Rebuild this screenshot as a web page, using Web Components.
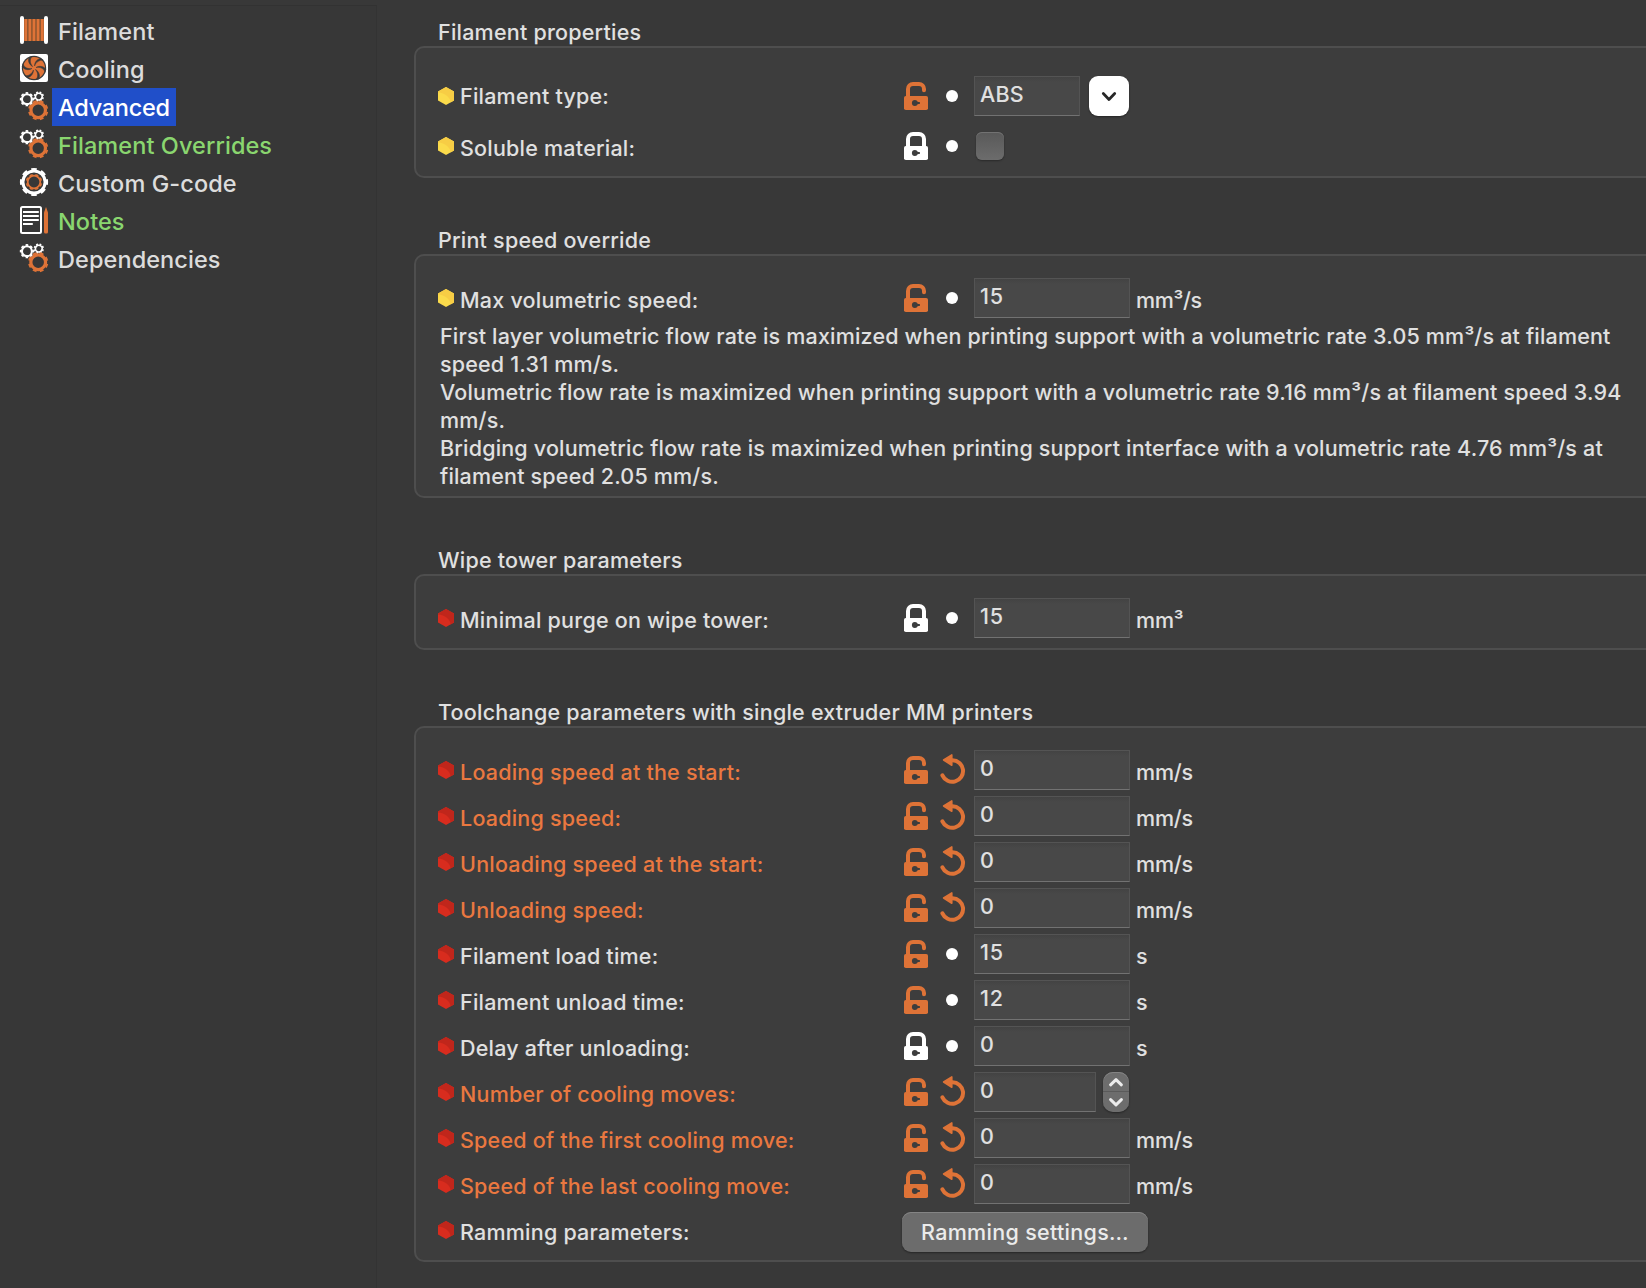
<!DOCTYPE html>
<html lang="en">
<head>
<meta charset="utf-8">
<title>Filament settings</title>
<style>
  html, body { margin: 0; height: 100%; background: #383838; overflow: hidden; }
  body { font: 450 21.5px/28px Inter, "Liberation Sans", sans-serif; color: #e0e0e0; letter-spacing: .22px; font-feature-settings: "calt" 0; }
</style>
</head>
<body>
<settings-page>
  <side-nav slot="nav">
    <nav-item icon="spool">Filament</nav-item>
    <nav-item icon="fan">Cooling</nav-item>
    <nav-item icon="gears" selected>Advanced</nav-item>
    <nav-item icon="gears" modified>Filament Overrides</nav-item>
    <nav-item icon="gcode">Custom G-code</nav-item>
    <nav-item icon="note" modified>Notes</nav-item>
    <nav-item icon="gears">Dependencies</nav-item>
  </side-nav>

  <option-group heading="Filament properties" style="--top:28px;--row-gap:10px;--bottom:10px">
    <option-row mode="advanced" lock="open" mark="dot" label="Filament type:" style="--label-top:6px"><text-field style="width:106px;letter-spacing:.2px">ABS</text-field><drop-button></drop-button></option-row>
    <option-row mode="advanced" lock="closed" mark="dot" label="Soluble material:"><check-box></check-box></option-row>
  </option-group>

  <option-group heading="Print speed override" style="--bottom:6px">
    <option-row mode="advanced" lock="open" mark="dot" label="Max volumetric speed:"><text-field>15</text-field><unit-label style="letter-spacing:-.35px">mm³/s</unit-label></option-row>
    <info-text>First layer volumetric flow rate is maximized when printing support with a volumetric rate 3.05 mm³/s at filament<br>speed 1.31 mm/s.<br>Volumetric flow rate is maximized when printing support with a volumetric rate 9.16 mm³/s at filament speed 3.94<br>mm/s.<br>Bridging volumetric flow rate is maximized when printing support interface with a volumetric rate 4.76 mm³/s at<br>filament speed 2.05 mm/s.</info-text>
  </option-group>

  <option-group heading="Wipe tower parameters" style="--bottom:10px">
    <option-row mode="expert" lock="closed" mark="dot" label="Minimal purge on wipe tower:"><text-field>15</text-field><unit-label>mm³</unit-label></option-row>
  </option-group>

  <option-group heading="Toolchange parameters with single extruder MM printers" style="--bottom:10px">
    <option-row mode="expert" lock="open" mark="revert" label="Loading speed at the start:"><text-field>0</text-field><unit-label>mm/s</unit-label></option-row>
    <option-row mode="expert" lock="open" mark="revert" label="Loading speed:"><text-field>0</text-field><unit-label>mm/s</unit-label></option-row>
    <option-row mode="expert" lock="open" mark="revert" label="Unloading speed at the start:"><text-field>0</text-field><unit-label>mm/s</unit-label></option-row>
    <option-row mode="expert" lock="open" mark="revert" label="Unloading speed:"><text-field>0</text-field><unit-label>mm/s</unit-label></option-row>
    <option-row mode="expert" lock="open" mark="dot" label="Filament load time:"><text-field>15</text-field><unit-label>s</unit-label></option-row>
    <option-row mode="expert" lock="open" mark="dot" label="Filament unload time:"><text-field>12</text-field><unit-label>s</unit-label></option-row>
    <option-row mode="expert" lock="closed" mark="dot" label="Delay after unloading:"><text-field>0</text-field><unit-label>s</unit-label></option-row>
    <option-row mode="expert" lock="open" mark="revert" label="Number of cooling moves:"><text-field style="width:122px">0</text-field><spin-buttons></spin-buttons></option-row>
    <option-row mode="expert" lock="open" mark="revert" label="Speed of the first cooling move:"><text-field>0</text-field><unit-label>mm/s</unit-label></option-row>
    <option-row mode="expert" lock="open" mark="revert" label="Speed of the last cooling move:"><text-field>0</text-field><unit-label>mm/s</unit-label></option-row>
    <option-row mode="expert" label="Ramming parameters:"><push-button>Ramming settings…</push-button></option-row>
  </option-group>
</settings-page>

<script>
const ORANGE = '#de7337';

// Ring with teeth: a toothed outer edge (dashed stroke) around a solid band.
const gear = (x, y, hole, rim, tip, color, turn = 0) => {
  const band = rim - hole, tooth = tip - rim + .6, rt = rim - .6 + tooth / 2;
  return `<g fill="none" stroke="${color}" transform="rotate(${turn} ${x} ${y})">
    <circle cx="${x}" cy="${y}" r="${hole + band / 2}" stroke-width="${band}"/>
    <circle cx="${x}" cy="${y}" r="${rt}" stroke-width="${tooth}" pathLength="16" stroke-dasharray="1.1 .9" stroke-dashoffset=".55"/></g>`;
};

// Dark gaps between the six blades: each widens from the hub to the rim.
const blades = Array.from({ length: 6 }, (_, i) =>
  `<path transform="rotate(${i * 60} 14 14)" d="M14.6 12C14.4 8 17.4 4.6 21 4.4L23.2 6.6C19.6 5.6 16 8 14.6 12z" fill="#393939" stroke="#393939" stroke-width=".5"/>`).join('');

const svg = (w, h, body) => `<svg width="${w}" height="${h}" viewBox="0 0 ${w} ${h}">${body}</svg>`;

const ICONS = {
  spool: svg(28, 28, `<path fill="#91572f" d="M4 3h20v22H4z"/>
    <path fill="${ORANGE}" d="M4.4 3H7v22H4.4zM8.6 3h2.5v22H8.6zM12.7 3h2.5v22h-2.5zM16.8 3h2.5v22h-2.5zM21 3h2.6v22H21z"/>
    <rect width="4" height="28" rx="2" fill="#fff"/><rect x="24" width="4" height="28" rx="2" fill="#fff"/>`),
  fan: svg(28, 28, `<rect width="28" height="28" rx="2" fill="#fff"/><circle cx="14" cy="14" r="12.2" fill="#393939"/>
    <circle cx="14" cy="14" r="11" fill="${ORANGE}"/>${blades}`),
  gears: svg(28, 28, gear(6.9, 7.2, 3.9, 6, 7.1, '#fff') + gear(18.8, 4.6, 2.5, 4.2, 5.2, '#fff', 22) + gear(18.2, 18.2, 5.7, 8.9, 10.1, ORANGE, 22.5)),
  gcode: svg(28, 28, gear(14, 14, 9.6, 12.6, 14.1, '#fff') + gear(14, 14, 5.4, 7.2, 8.2, ORANGE, 22.5)),
  note: svg(28, 28, `<rect x="1" y="1" width="20" height="26" rx="1.5" fill="none" stroke="#fff" stroke-width="2"/>
    <path stroke="#fff" stroke-width="2" d="M3 6h15.8M3 10h15.8M3 14h15.8M3 18h9.8"/>
    <path fill="${ORANGE}" d="M24 6.5 26 1l2 5.5V26a1.6 1.6 0 0 1-1.6 1.6h-.8A1.6 1.6 0 0 1 24 26z"/>`),
  lock: (color, closed) => svg(24, 28, `<path fill="none" stroke="${color}" stroke-width="4" stroke-linecap="round"
      d="M4 15V7A5 5 0 0 1 9 2H15A5 5 0 0 1 20 7V${closed ? 15 : 8.2}"/>
    <rect y="14" width="24" height="14" rx="1.8" fill="${color}"/>
    <circle cx="10.8" cy="21" r="2.9" fill="#3d3d3d"/><path fill="#3d3d3d" d="M12 19.6 16 20.2V21.8L12 22.4z"/>`),
  dot: svg(12, 12, `<circle cx="6" cy="6" r="6" fill="#fff"/>`),
  revert: svg(26, 30, `<path fill="none" stroke="${ORANGE}" stroke-width="4" stroke-linecap="round" d="M2.4 21.4A10.8 10.8 0 1 0 12.4 6.2"/>
    <path fill="${ORANGE}" stroke="${ORANGE}" stroke-width="1.6" stroke-linejoin="round" d="M3.6 6 11.8 .9V11.2z"/>`),
  hex: (base, shade) => svg(16, 18, `<path fill="${base}" d="M8 0 16 4.5V13.5L8 18 0 13.5V4.5z"/>
    <path fill="${shade}" d="M0 4.5 8 0 16 4.5V13.5L12.6 15.4C12.4 10.5 7 6 0 5.6z"/>`)
};

const define = (name, render) => customElements.define(name, class extends HTMLElement {
  connectedCallback() {
    if (this.shadowRoot) return;
    this.attachShadow({ mode: 'open' }).innerHTML = render(this);
  }
});

define('settings-page', () => `<style>
  :host { display: flex; height: 1288px; box-sizing: border-box; overflow: hidden; }
  main { flex: none; width: 1260px; margin-left: 37px; padding-top: 18px; display: flex; flex-direction: column; gap: 48px; }
</style><slot name="nav"></slot><main><slot></slot></main>`);

define('side-nav', () => `<style>
  :host { display: flex; flex-direction: column; align-items: flex-start; box-sizing: border-box; flex: none; width: 377px;
    margin-top: 5px; padding-top: 6px; border-top: 1px solid #323232; border-right: 1px solid #333; background: #373737; }
</style><slot></slot>`);

define('nav-item', el => `<style>
  :host { display: flex; align-items: center; height: 38px; padding-left: 20px; font-size: 23.5px; line-height: 36px; letter-spacing: .08px; color: #dcdcdc; }
  :host([modified]) { color: #8ad66f; }
  svg { display: block; margin-top: -2px; overflow: visible; }
  span { margin-left: 4px; padding: 2px 6px 0; white-space: nowrap; }
  :host([selected]) span { background: #204fc9; color: #fff; letter-spacing: -.25px; }
</style>${ICONS[el.getAttribute('icon')]}<span><slot></slot></span>`);

define('option-group', el => `<style>
  :host { display: block; }
  h2 { margin: 0; padding-left: 24px; font: inherit; white-space: nowrap; }
  section { display: flex; flex-direction: column; gap: var(--row-gap, 6px); box-sizing: border-box;
    padding: var(--top, 22px) 0 var(--bottom, 10px) 22px; border: 2px solid #4e4e4e; border-radius: 10px; background: #3d3d3d; }
</style><h2>${el.getAttribute('heading')}</h2><section><slot></slot></section>`);

define('option-row', el => {
  const lock = el.getAttribute('lock'), mark = el.getAttribute('mark');
  const hex = el.getAttribute('mode') === 'expert' ? ICONS.hex('#d82c1e', '#c0261b') : ICONS.hex('#fbdb4b', '#f7cd45');
  const marks = lock ? `<span class="lock">${ICONS.lock(lock === 'open' ? ORANGE : '#fff', lock === 'closed')}</span>
    <span class="mark ${mark}">${ICONS[mark]}</span>` : '';
  return `<style>
  :host { display: flex; height: 40px; }
  svg { display: block; }
  .name { display: flex; flex: none; width: 466px; gap: 6px; }
  .name svg { margin-top: 11px; }
  .name label { padding-top: var(--label-top, 8px); white-space: nowrap; }
  :host([mark="revert"]) label { color: #ea7840; }
  .lock { padding-top: 6px; }
  .mark { display: flex; flex: none; width: 46px; box-sizing: border-box; padding: 14px 0 0 18px; }
  .mark.revert { padding: 4px 0 0 12px; }
</style><span class="name">${hex}<label>${el.getAttribute('label')}</label></span>${marks}<slot></slot>`;
});

define('text-field', () => `<style>
  :host { display: block; box-sizing: border-box; width: 156px; height: 40px; padding: 3px 0 0 5px;
    border: 1px solid #545454; border-bottom-color: #727272; background: linear-gradient(#434343, #484848 5px); letter-spacing: .8px; }
</style><slot></slot>`);

define('unit-label', () => `<style>
  :host { display: block; padding: 8px 0 0 6px; letter-spacing: -.2px; }
</style><slot></slot>`);

define('drop-button', () => `<style>
  :host { display: block; width: 40px; height: 40px; margin-left: 9px; border-radius: 9px; background: #fff; box-shadow: 0 1px 2px #0006; }
  svg { display: block; }
</style>${svg(40, 40, `<path d="M14.3 17.6 20 23.4 25.7 17.6" fill="none" stroke="#272727" stroke-width="2.8" stroke-linecap="round" stroke-linejoin="round"/>`)}`);

define('check-box', () => `<style>
  :host { display: block; width: 28px; height: 28px; margin: 6px 0 0 2px; border-radius: 6px;
    background: linear-gradient(#595959, #6c6c6c); box-shadow: 0 1px 2px #0005, inset 0 1px #727272; }
</style>`);

define('spin-buttons', () => `<style>
  :host { display: block; width: 26px; height: 40px; margin-left: 7px; border-radius: 10px;
    background: linear-gradient(#6d6d6d 19px, #5a5a5a 19px 20px, #6d6d6d 20px); box-shadow: 0 1px 2px #0006, inset 0 1px #848484; }
  svg { display: block; }
</style>${svg(26, 40, `<path d="M7.6 12.8 13 7.6 18.4 12.8M7.6 27.6 13 32.8 18.4 27.6" fill="none" stroke="#ececec" stroke-width="3" stroke-linecap="round" stroke-linejoin="round"/>`)}`);

define('push-button', () => `<style>
  :host { display: flex; justify-content: center; box-sizing: border-box; width: 246px; height: 40px; margin: 2px 0 0 -2px; padding-top: 6px;
    border-radius: 9px; background: #6c6c6c; color: #ebebeb; letter-spacing: .3px; box-shadow: 0 1px 2px #0006, inset 0 1px #848484; white-space: nowrap; }
</style><slot></slot>`);

define('info-text', () => `<style>
  :host { display: block; margin-top: -2px; padding-left: 2px; letter-spacing: .18px; white-space: nowrap; }
</style><slot></slot>`);
</script>
</body>
</html>
